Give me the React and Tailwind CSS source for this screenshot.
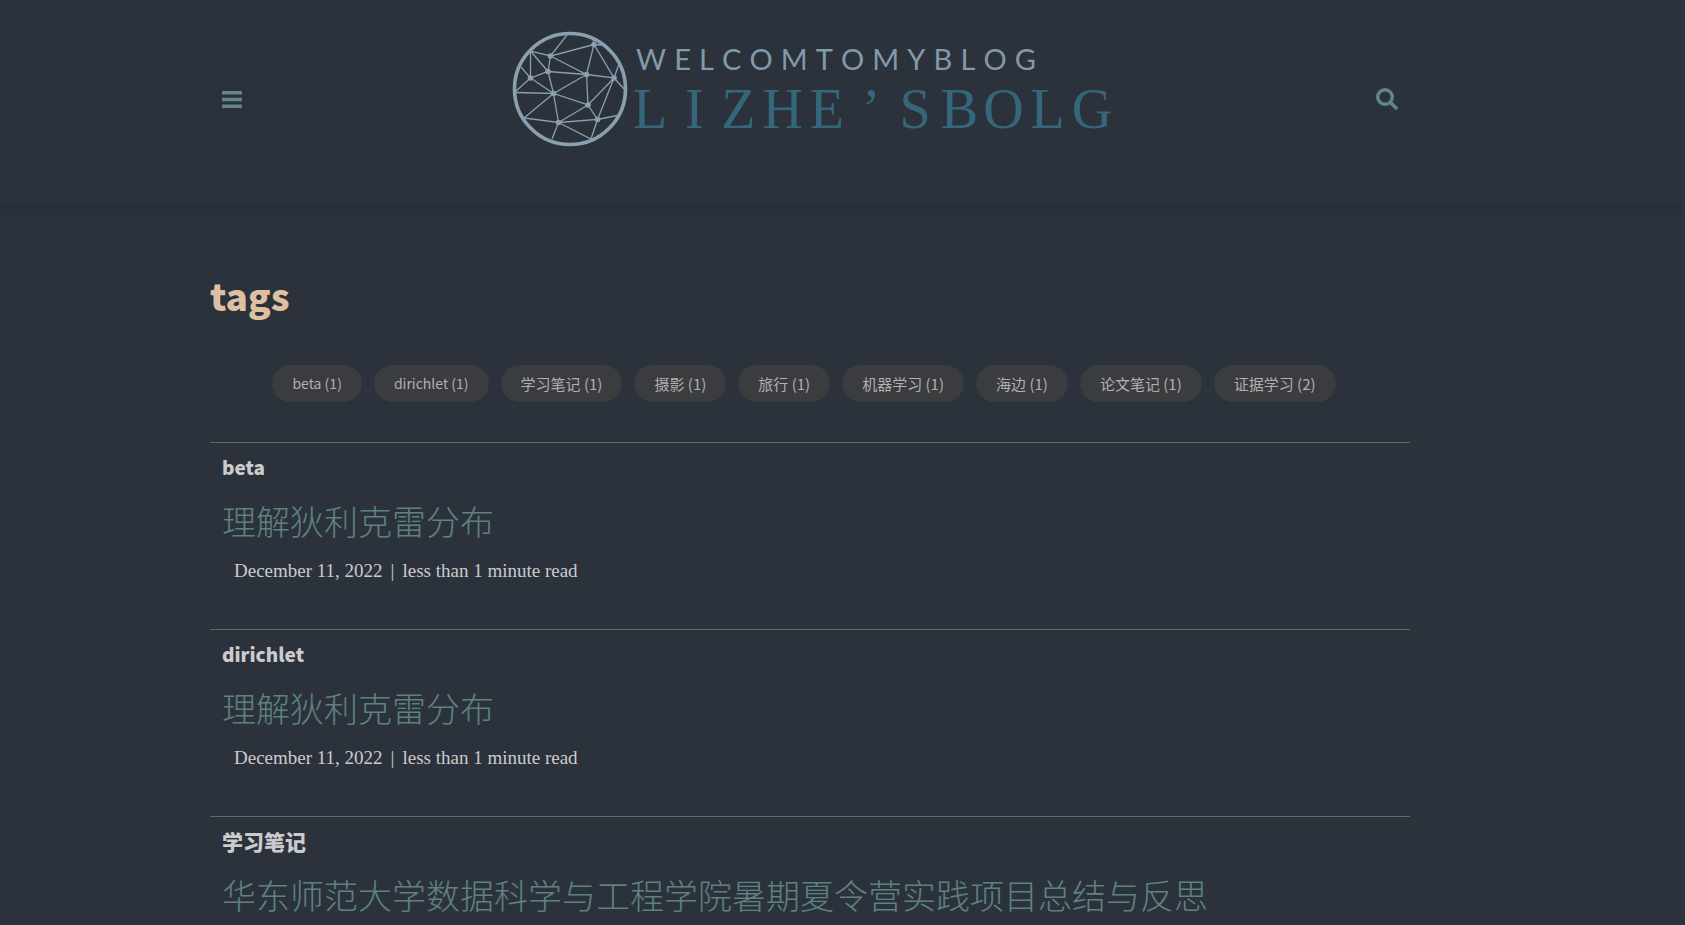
import React from "react";

const tags = [
  ["beta", 1],
  ["dirichlet", 1],
  ["学习笔记", 1],
  ["摄影", 1],
  ["旅行", 1],
  ["机器学习", 1],
  ["海边", 1],
  ["论文笔记", 1],
  ["证据学习", 2],
];

const sections = [
  { tag: "beta", title: "理解狄利克雷分布", date: "December 11, 2022", read: "less than 1 minute read" },
  { tag: "dirichlet", title: "理解狄利克雷分布", date: "December 11, 2022", read: "less than 1 minute read" },
  { tag: "学习笔记", title: "华东师范大学数据科学与工程学院暑期夏令营实践项目总结与反思" },
];

const isLatin = (text) => /^[a-z]+$/i.test(text);

const nodes = [
  [51.5, 36], [95, 24.5], [49, 51.5], [31.5, 58], [87.5, 54.5], [115, 58],
  [54.5, 73.5], [89, 85], [59.5, 102.5], [98.5, 99.5],
];

function Globe() {
  return (
    <svg viewBox="13 11 116 116" className="size-[116px] shrink-0" fill="none" stroke="#8aa0b0" aria-hidden="true">
      <circle cx="71" cy="69" r="55.5" strokeWidth="3.6" />
      <path
        strokeWidth="1.3"
        d="M68 15 51.5 36 31.5 31 49 51.5 51.5 36 95 24.5 87.5 54.5 51.5 36M31.5 31V58L49 51.5 87.5 54.5 115 58 95 24.5 94 18M95 24.5 103 25M120 44 115 58 126 70M115 58 89 85 87.5 54.5 54.5 73.5 49 51.5M22 47 31.5 58 17 71M31.5 58 54.5 73.5 17 72.5M54.5 73.5 25 98 59.5 102.5 54.5 73.5 89 85 59.5 102.5 98.5 99.5 89 85M115 58 98.5 99.5 118 95.5M59.5 102.5 92 119 98.5 99.5M59.5 102.5 53 119"
      />
      <g fill="#8aa0b0" stroke="none">
        {nodes.map(([x, y]) => (
          <circle key={`${x}-${y}`} cx={x} cy={y} r="2.8" />
        ))}
      </g>
    </svg>
  );
}

function Logo() {
  return (
    <a href="#home" aria-label="WELCOMTOMYBLOG LIZHE’SBOLG" className="flex items-start gap-2">
      <Globe />
      <span className="flex flex-col pt-3">
        <span className="flex w-[400px] justify-between font-[Lato,sans-serif] text-[29px] leading-8 text-[#8299a9]">
          {"WELCOMTOMYBLOG".split("").map((c, i) => (
            <span key={i}>{c}</span>
          ))}
        </span>
        <span className="-mx-2 mt-1 grid w-[486px] grid-cols-11 text-center font-['Liberation_Serif',serif] text-[56px] leading-[60px] text-[#35677a]">
          {"LIZHE’SBOLG".split("").map((c, i) => (
            <span key={i}>{c}</span>
          ))}
        </span>
      </span>
    </a>
  );
}

export default function App() {
  return (
    <div className="h-screen overflow-hidden bg-[#2c323c] font-['Noto_Sans_CJK_SC',sans-serif] text-[#cbcbcd]">
      <header className="pr-[65px] pb-[58px] shadow-[0_3px_6px_rgba(0,0,0,0.08)]">
        <div className="mx-auto flex max-w-[1200px] items-center justify-between px-3 pt-[31px]">
          <button type="button" aria-label="Menu" className="mt-5 text-[#618887]">
            <svg viewBox="0 0 20 17" className="h-[17px] w-5" fill="currentColor" aria-hidden="true">
              <path d="M0 0h20v3.5H0zM0 6.8h20v3.5H0zM0 13.6h20v3.5H0z" />
            </svg>
          </button>
          <Logo />
          <button type="button" aria-label="Search" className="mt-5 text-[#618887]">
            <svg viewBox="0 0 22 22" className="size-[22px]" fill="none" stroke="currentColor" aria-hidden="true">
              <circle cx="9" cy="9" r="7.3" strokeWidth="3.4" />
              <path d="m14.5 14.5 5.5 5.5" strokeWidth="3.6" strokeLinecap="round" />
            </svg>
          </button>
        </div>
      </header>

      <main className="pr-[65px]">
        <div className="mx-auto max-w-[1200px] pt-16">
          <h1 className="text-[37px] leading-[52px] font-black text-[#dfbfa2]">tags</h1>
          <ul className="mt-11 flex flex-wrap justify-center gap-3 pr-3">
            {tags.map(([name, count]) => (
              <li key={name}>
                <a
                  href={`#${name}`}
                  className={`block rounded-full bg-[#3b3c3f] px-5 leading-[37px] text-[#b0b0ae] ${
                    isLatin(name) ? "text-[14px]" : "text-[15px]"
                  }`}
                >
                  {name} ({count})
                </a>
              </li>
            ))}
          </ul>

          <div className="mt-10">
            {sections.map((s) => (
              <section key={s.tag} id={s.tag} className="h-[187px] border-t border-[#66655f] px-3 pt-2">
                <h2 className={`leading-8 font-black ${isLatin(s.tag) ? "text-[19px]" : "text-[21px]"}`}>{s.tag}</h2>
                <h3 className="mt-3 text-[34px] leading-[52px] font-light text-[#5d8280]">
                  <a href="#post">{s.title}</a>
                </h3>
                {s.date && (
                  <p className="mt-2 flex gap-2 px-3 font-['Liberation_Serif',serif] text-[19px] leading-8">
                    <span>{s.date}</span>
                    <span>|</span>
                    <span>{s.read}</span>
                  </p>
                )}
              </section>
            ))}
          </div>
        </div>
      </main>
    </div>
  );
}
